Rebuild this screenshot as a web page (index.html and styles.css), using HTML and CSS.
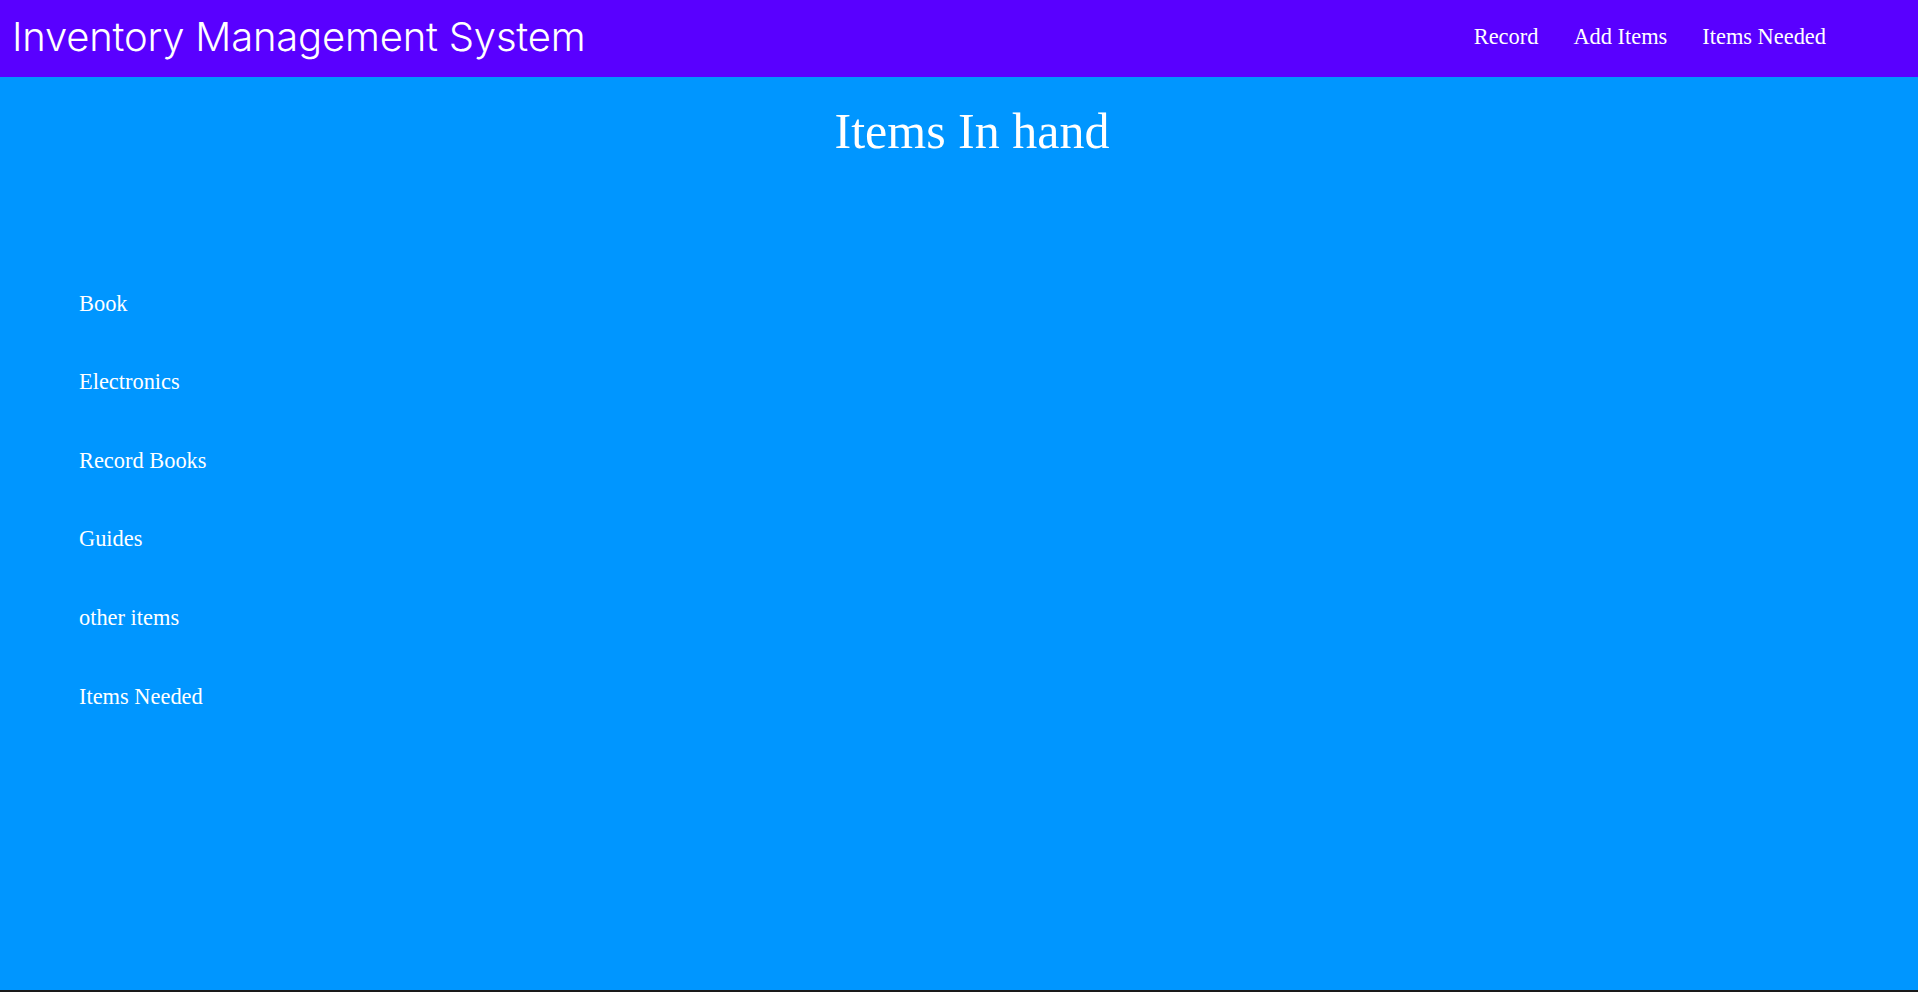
FILE: index.html
```html
<!DOCTYPE html>
<html lang="en">
<head>
<meta charset="utf-8">
<title>Inventory Management System</title>
<link rel="stylesheet" href="styles.css">
</head>
<body>
<div class="page">
  <header class="topbar">
    <div class="brand">Inventory Management System</div>
    <nav class="nav">
      <a href="#">Record</a>
      <a href="#">Add Items</a>
      <a href="#">Items Needed</a>
    </nav>
  </header>
  <main class="content">
    <h1 class="heading">Items In hand</h1>
    <ul class="items">
      <li>Book</li>
      <li>Electronics</li>
      <li>Record Books</li>
      <li>Guides</li>
      <li>other items</li>
      <li>Items Needed</li>
    </ul>
  </main>
</div>
</body>
</html>
```
FILE: styles.css
```css
html, body {
  margin: 0;
  padding: 0;
}
body {
  background: #1a1a1a;
  font-family: "Liberation Serif", "Times New Roman", serif;
  color: #ffffff;
}
.page {
  height: 992px;
  box-sizing: border-box;
  border-bottom: 2px solid #1a1a1a;
  background: #0096ff;
  display: flex;
  flex-direction: column;
}
.topbar {
  height: 77px;
  flex: none;
  background: #5900ff;
  display: flex;
  align-items: center;
  justify-content: space-between;
  padding: 0 92px 3px 12px;
  box-sizing: border-box;
}
.brand {
  font-family: "Inter", "Lato", sans-serif;
  font-weight: 300;
  font-size: 40px;
  line-height: 1;
  letter-spacing: -0.2px;
}
.nav {
  display: flex;
  gap: 35px;
}
.nav a {
  color: #ffffff;
  text-decoration: none;
  font-size: 22.4px;
  line-height: 1.15;
}
.content {
  flex: 1;
}
.heading {
  margin: 26px 0 0;
  padding-left: 26px;
  text-align: center;
  font-weight: normal;
  font-size: 50px;
  line-height: 1.15;
}
.items {
  list-style: none;
  margin: 130px 0 0;
  padding: 0 0 0 79px;
  display: flex;
  flex-direction: column;
  gap: 52.9px;
}
.items li {
  font-size: 22.4px;
  line-height: 1.15;
}
```
